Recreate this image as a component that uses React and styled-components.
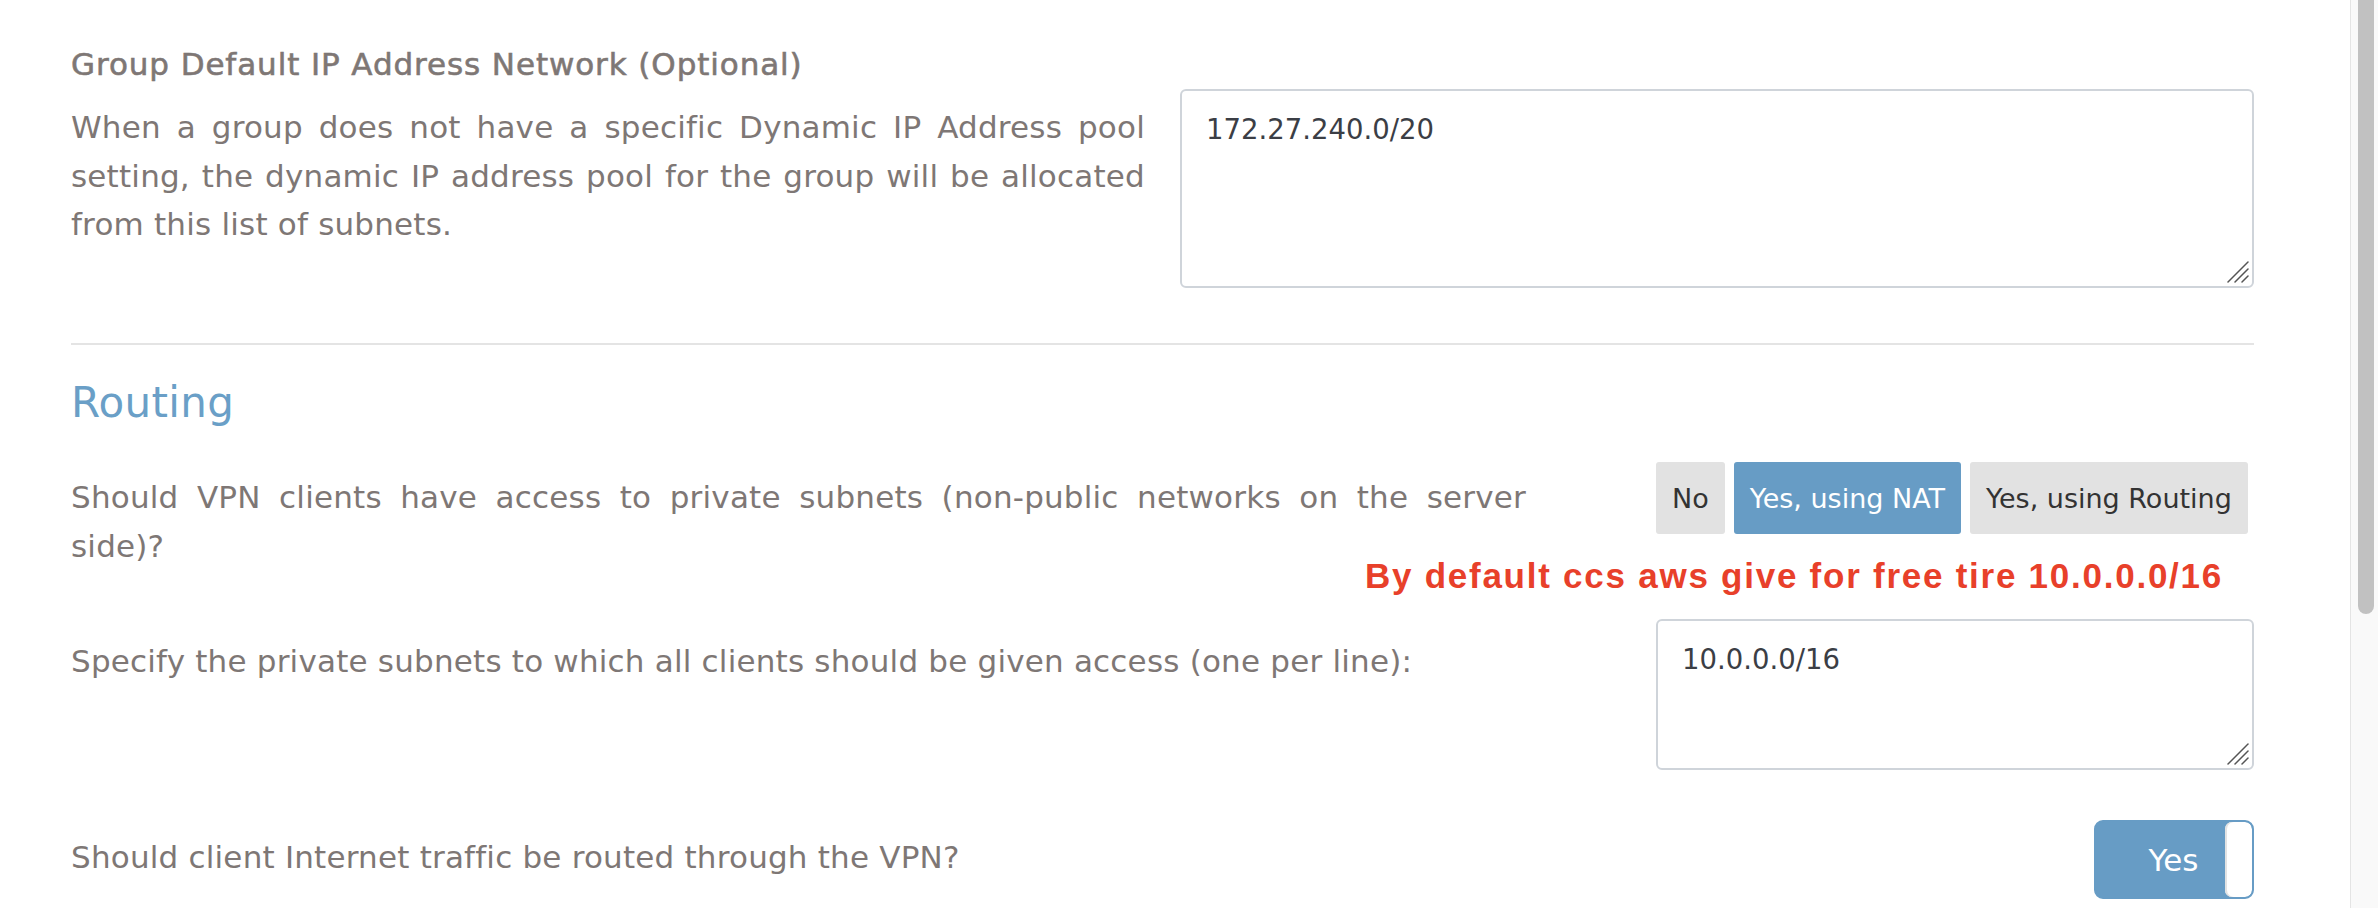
import React from 'react';
import styled, { createGlobalStyle } from 'styled-components';

const GlobalStyle = createGlobalStyle`
  html, body {
    margin: 0;
    padding: 0;
    background: #ffffff;
    overflow: hidden;
  }
  * {
    box-sizing: border-box;
  }
`;

const Page = styled.div`
  display: flex;
  width: 2378px;
  height: 908px;
  overflow: hidden;
  font-family: "DejaVu Sans", "Open Sans", sans-serif;
  color: #7e7775;
`;

const Main = styled.main`
  flex: 1;
  padding: 40px 96px 0 71px;
`;

const Scrollbar = styled.div`
  width: 28px;
  height: 100%;
  background: #f9f9f9;
  border-left: 1px solid #e4e4e4;
  display: flex;
  justify-content: center;
`;

const ScrollThumb = styled.div`
  width: 16px;
  height: 634px;
  margin-top: -20px;
  margin-left: 2px;
  background: #c1c1c1;
  border-radius: 8px;
`;

const FieldTitle = styled.h4`
  margin: 0;
  font-size: 31px;
  font-weight: 400;
  line-height: 48px;
  letter-spacing: 0.9px;
  -webkit-text-stroke: 0.6px #7e7775;
`;

const Row = styled.div`
  display: grid;
  grid-template-columns: 1fr ${(p) => p.$control}px;
  column-gap: ${(p) => p.$gap}px;
  margin-top: ${(p) => p.$top}px;
  align-items: start;
`;

const Label = styled.p`
  margin: 0;
  padding-top: ${(p) => p.$offset}px;
  font-size: 31px;
  line-height: 48.5px;
  letter-spacing: 0.2px;
  text-align: ${(p) => (p.$justify ? 'justify' : 'left')};
`;

const FieldBox = styled.div`
  position: relative;
`;

const TextArea = styled.textarea`
  display: block;
  width: 100%;
  height: ${(p) => p.$height}px;
  padding: 14px 24px;
  border: 2px solid #cfd4da;
  border-radius: 6px;
  background: #fff;
  font-family: "DejaVu Sans", "Open Sans", sans-serif;
  font-size: 27.5px;
  line-height: 48px;
  color: #3b3e45;
  resize: none;
  outline: none;
`;

const Grip = styled.svg`
  position: absolute;
  right: 5px;
  bottom: 5px;
  width: 24px;
  height: 24px;
  pointer-events: none;
`;

const Divider = styled.hr`
  margin: 55px 0 0;
  border: 0;
  height: 2px;
  background: #e4e4e4;
`;

const SectionTitle = styled.h3`
  margin: 33px 0 0;
  font-size: 42px;
  font-weight: 400;
  line-height: 50px;
  color: #6a9fc7;
  letter-spacing: 0.3px;
`;

const Control = styled.div`
  position: relative;
  display: flex;
  justify-content: ${(p) => p.$align || 'flex-start'};
`;

const ButtonGroup = styled.div`
  display: flex;
  gap: 9px;
`;

const OptionButton = styled.button`
  height: 72px;
  padding: 0 16px;
  border: 0;
  border-radius: 3px;
  font-family: "DejaVu Sans", "Open Sans", sans-serif;
  font-size: 27px;
  color: ${(p) => (p.$active ? '#ffffff' : '#333333')};
  background: ${(p) => (p.$active ? '#679cc5' : '#e2e2e2')};
  cursor: pointer;
`;

const Note = styled.div`
  position: absolute;
  top: 94px;
  right: 31px;
  white-space: nowrap;
  font-family: "Liberation Sans", Arial, sans-serif;
  font-weight: 700;
  font-size: 35px;
  line-height: 40px;
  letter-spacing: 1.75px;
  color: #e8402a;
`;

const Toggle = styled.div`
  display: flex;
  width: 160px;
  height: 79px;
  border: 2px solid #679cc5;
  border-radius: 9px;
  background: #679cc5;
  overflow: hidden;
`;

const ToggleText = styled.span`
  flex: 1;
  display: flex;
  align-items: center;
  justify-content: center;
  padding-left: 26px;
  font-size: 31px;
  color: #ffffff;
`;

const ToggleKnob = styled.span`
  width: 27px;
  background: #ffffff;
  border-radius: 7px;
  box-shadow: inset 2px 0 0 #e3e3e3;
`;

const options = ['No', 'Yes, using NAT', 'Yes, using Routing'];

function SubnetField({ height, value }) {
  return (
    <FieldBox>
      <TextArea $height={height} defaultValue={value} />
      <Grip viewBox="0 0 24 24">
        <g stroke="#555555" strokeWidth="1.5" strokeLinecap="round">
          <line x1="3" y1="23" x2="23" y2="3" />
          <line x1="10" y1="23" x2="23" y2="10" />
          <line x1="17" y1="23" x2="23" y2="17" />
        </g>
      </Grip>
    </FieldBox>
  );
}

export default function App() {
  return (
    <>
      <GlobalStyle />
      <Page>
        <Main>
          <FieldTitle>Group Default IP Address Network (Optional)</FieldTitle>
          <Row $control={1074} $gap={35} $top={1}>
            <Label $offset={14} $justify>
              When a group does not have a specific Dynamic IP Address pool setting, the
              dynamic IP address pool for the group will be allocated from this list of
              subnets.
            </Label>
            <SubnetField height={199} value="172.27.240.0/20" />
          </Row>

          <Divider />

          <SectionTitle>Routing</SectionTitle>

          <Row $control={598} $gap={130} $top={34}>
            <Label $offset={11} $justify>
              Should VPN clients have access to private subnets (non-public networks on the
              server side)?
            </Label>
            <Control>
              <ButtonGroup>
                {options.map((o) => (
                  <OptionButton key={o} $active={o === 'Yes, using NAT'}>
                    {o}
                  </OptionButton>
                ))}
              </ButtonGroup>
              <Note>By default ccs aws give for free tire 10.0.0.0/16</Note>
            </Control>
          </Row>

          <Row $control={598} $gap={130} $top={49}>
            <Label $offset={18}>
              Specify the private subnets to which all clients should be given access (one
              per line):
            </Label>
            <SubnetField height={151} value="10.0.0.0/16" />
          </Row>

          <Row $control={598} $gap={130} $top={50}>
            <Label $offset={13}>Should client Internet traffic be routed through the VPN?</Label>
            <Control $align="flex-end">
              <Toggle>
                <ToggleText>Yes</ToggleText>
                <ToggleKnob />
              </Toggle>
            </Control>
          </Row>
        </Main>
        <Scrollbar>
          <ScrollThumb />
        </Scrollbar>
      </Page>
    </>
  );
}
